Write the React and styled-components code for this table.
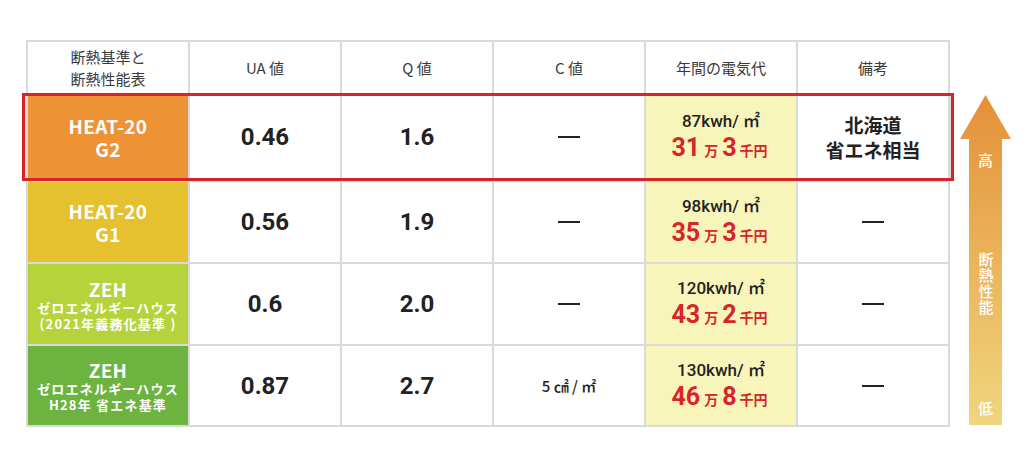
import React from 'react';
import styled, { createGlobalStyle } from 'styled-components';

const Global = createGlobalStyle`
  html, body { margin: 0; padding: 0; background: #fff; }
  body { font-family: "Noto Sans CJK JP", "Noto Sans", sans-serif; color: #222; }
`;

const Page = styled.div`
  display: flex;
  align-items: flex-start;
  gap: 10px;
  padding: 40px 0 0 26px;
  width: 1024px;
  height: 450px;
  box-sizing: border-box;
`;

const Table = styled.div`
  width: 924px;
  box-sizing: border-box;
  background: #dadada;
  padding: 2px;
  display: flex;
  flex-direction: column;
`;

const Row = styled.div`
  display: grid;
  grid-template-columns: 160px repeat(5, 1fr);
  column-gap: 2px;
  height: ${(p) => p.$h}px;
  margin-top: ${(p) => p.$gap}px;
  box-sizing: border-box;
`;

const HighlightRow = styled(Row)`
  margin: 0 -6px;
  border: 3px solid #d7232a;
  padding: 0 3px;
  background: #dadada;
`;

const Cell = styled.div`
  background: ${(p) => p.$bg || '#fff'};
  display: flex;
  flex-direction: column;
  align-items: center;
  justify-content: center;
  text-align: center;
`;

const HeadText = styled.div`
  font-size: 15px;
  line-height: 22px;
  color: #3a3a3a;
`;

const LabelMain = styled.div`
  color: #fff;
  font-weight: 700;
  font-size: 19px;
  line-height: 23px;
  letter-spacing: 0.3px;
`;

const LabelSub = styled.div`
  color: #fff;
  font-weight: 700;
  font-size: 13px;
  line-height: 16px;
  letter-spacing: 1.2px;
  white-space: nowrap;
`;

const Value = styled.div`
  font-family: Roboto, "Noto Sans CJK JP", sans-serif;
  font-weight: 700;
  font-size: 24px;
  color: #222;
`;

const Dash = styled.div`
  width: 22px;
  height: 2px;
  background: #222;
`;

const SmallValue = styled.div`
  font-size: 15px;
  font-weight: 500;
  color: #222;
`;

const Kwh = styled.div`
  font-family: Roboto, "Noto Sans CJK JP", sans-serif;
  font-size: 17px;
  font-weight: 500;
  line-height: 24px;
  color: #222;
`;

const Cost = styled.div`
  color: #d7232a;
  font-weight: 700;
  line-height: 30px;
  display: flex;
  align-items: baseline;
`;

const Big = styled.span`
  font-family: Roboto, "Noto Sans CJK JP", sans-serif;
  font-size: 25px;
`;

const Unit = styled.span`
  font-size: 14px;
  margin: 0 ${(p) => p.$m ?? 4}px;
`;

const Remark = styled.div`
  font-size: 19px;
  font-weight: 700;
  line-height: 25px;
  color: #222;
`;

const ArrowCol = styled.div`
  width: 51px;
  margin-top: 55px;
  display: flex;
  flex-direction: column;
  align-items: center;
`;

const Shaft = styled.div`
  width: 33px;
  height: 286px;
  background: linear-gradient(#e69a42, #f0d67e);
  display: flex;
  flex-direction: column;
  justify-content: space-between;
  align-items: center;
  padding: 12px 0 8px;
  box-sizing: border-box;
  color: #fff;
  font-size: 15px;
  line-height: 18px;
  font-weight: 500;
`;

const Vertical = styled.div`
  writing-mode: vertical-rl;
  text-orientation: upright;
  line-height: 18px;
  letter-spacing: 1px;
`;

const COLORS = {
  orange: '#ee9236',
  yellow: '#e5c12f',
  lime: '#b6d33b',
  green: '#6cb33f',
  pale: '#f8f5bb',
};

function Electric({ kwh, man, sen }) {
  return (
    <Cell $bg={COLORS.pale}>
      <Kwh>{kwh}kwh/ ㎡</Kwh>
      <Cost>
        <Big>{man}</Big>
        <Unit>万</Unit>
        <Big>{sen}</Big>
        <Unit $m={3}>千円</Unit>
      </Cost>
    </Cell>
  );
}

export default function App() {
  return (
    <>
      <Global />
      <Page>
        <Table>
          <Row $h={51} $gap={0}>
            <Cell><HeadText>断熱基準と<br />断熱性能表</HeadText></Cell>
            <Cell><HeadText>UA 値</HeadText></Cell>
            <Cell><HeadText>Q 値</HeadText></Cell>
            <Cell><HeadText>C 値</HeadText></Cell>
            <Cell><HeadText>年間の電気代</HeadText></Cell>
            <Cell><HeadText>備考</HeadText></Cell>
          </Row>
          <HighlightRow $h={88} $gap={0}>
            <Cell $bg={COLORS.orange}><LabelMain>HEAT-20<br />G2</LabelMain></Cell>
            <Cell><Value>0.46</Value></Cell>
            <Cell><Value>1.6</Value></Cell>
            <Cell><Dash /></Cell>
            <Electric kwh="87" man="31" sen="3" />
            <Cell><Remark>北海道<br />省エネ相当</Remark></Cell>
          </HighlightRow>
          <Row $h={80} $gap={1}>
            <Cell $bg={COLORS.yellow}><LabelMain>HEAT-20<br />G1</LabelMain></Cell>
            <Cell><Value>0.56</Value></Cell>
            <Cell><Value>1.9</Value></Cell>
            <Cell><Dash /></Cell>
            <Electric kwh="98" man="35" sen="3" />
            <Cell><Dash /></Cell>
          </Row>
          <Row $h={80} $gap={2}>
            <Cell $bg={COLORS.lime}>
              <LabelMain>ZEH</LabelMain>
              <LabelSub>ゼロエネルギーハウス</LabelSub>
              <LabelSub>(2021年義務化基準 )</LabelSub>
            </Cell>
            <Cell><Value>0.6</Value></Cell>
            <Cell><Value>2.0</Value></Cell>
            <Cell><Dash /></Cell>
            <Electric kwh="120" man="43" sen="2" />
            <Cell><Dash /></Cell>
          </Row>
          <Row $h={79} $gap={2}>
            <Cell $bg={COLORS.green}>
              <LabelMain>ZEH</LabelMain>
              <LabelSub>ゼロエネルギーハウス</LabelSub>
              <LabelSub>H28年 省エネ基準</LabelSub>
            </Cell>
            <Cell><Value>0.87</Value></Cell>
            <Cell><Value>2.7</Value></Cell>
            <Cell><SmallValue>5 ㎠ / ㎡</SmallValue></Cell>
            <Electric kwh="130" man="46" sen="8" />
            <Cell><Dash /></Cell>
          </Row>
        </Table>
        <ArrowCol>
          <svg width="51" height="44" viewBox="0 0 51 44">
            <defs>
              <linearGradient id="headGrad" x1="0" y1="0" x2="0" y2="1">
                <stop offset="0" stopColor="#e58f38" />
                <stop offset="1" stopColor="#e69a42" />
              </linearGradient>
            </defs>
            <polygon points="25.5,0 51,44 0,44" fill="url(#headGrad)" />
          </svg>
          <Shaft>
            <div>高</div>
            <Vertical>断熱性能</Vertical>
            <div>低</div>
          </Shaft>
        </ArrowCol>
      </Page>
    </>
  );
}
